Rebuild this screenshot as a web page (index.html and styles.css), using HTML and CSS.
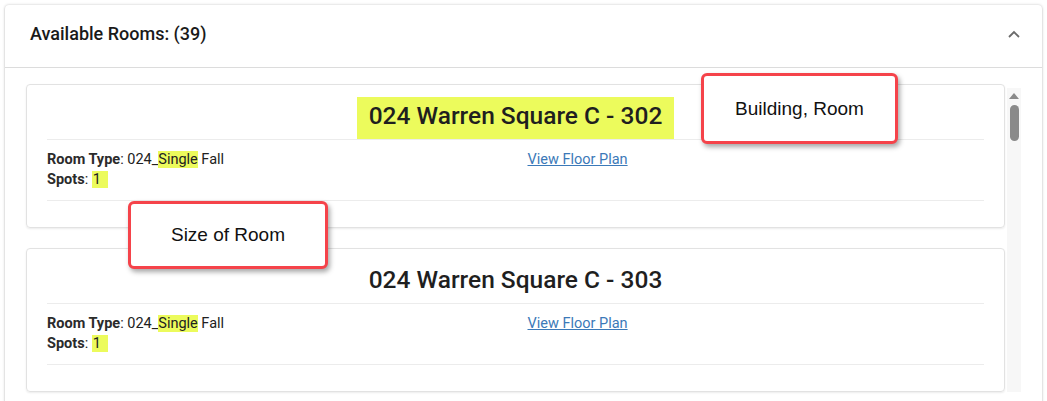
FILE: index.html
```html
<!DOCTYPE html>
<html lang="en">
<head>
    <meta charset="UTF-8">
    <title>Available Rooms</title>
    <link rel="stylesheet" href="styles.css">
</head>
<body>
<div class="panel">
    <div class="panel-head">
        <h2 class="panel-title">Available Rooms: (39)</h2>
        <svg class="chevron" width="12" height="8" viewBox="0 0 12 8"><path d="M1 7 L6 2 L11 7" fill="none" stroke="#6b6b6b" stroke-width="1.8"/></svg>
    </div>
    <div class="panel-body">
        <div class="room-list">
            <div class="room-card">
                <div class="room-name"><span class="mark mark-title">024 Warren Square C - 302</span></div>
                <div class="room-info">
                    <div class="col">
                        <div><b>Room Type</b>: 024_<span class="mark">Single</span> Fall</div>
                        <div><b>Spots</b>: <span class="mark mark-num">1</span></div>
                    </div>
                    <div class="col"><a href="#">View Floor Plan</a></div>
                </div>
            </div>
            <div class="room-card">
                <div class="room-name"><span>024 Warren Square C - 303</span></div>
                <div class="room-info">
                    <div class="col">
                        <div><b>Room Type</b>: 024_<span class="mark">Single</span> Fall</div>
                        <div><b>Spots</b>: <span class="mark mark-num">1</span></div>
                    </div>
                    <div class="col"><a href="#">View Floor Plan</a></div>
                </div>
            </div>
        </div>
        <div class="scrollbar">
            <div class="scroll-arrow"></div>
            <div class="scroll-thumb"></div>
        </div>
    </div>

    <div class="note note-building">Building, Room</div>
    <div class="note note-size">Size of Room</div>
</div>
</body>
</html>
```

FILE: styles.css
```css
* {
    margin: 0;
    padding: 0;
    box-sizing: border-box;
}

html, body {
    height: 100%;
    overflow: hidden;
    background: #fff;
}

body {
    padding: 5px 5px 0 5px;
    font-family: Roboto, "Liberation Sans", Arial, sans-serif;
    color: #212121;
}

.panel {
    position: relative;
    height: 420px;
    border-radius: 4px;
    background: #fff;
    box-shadow: 0 0 3px rgba(0, 0, 0, 0.22), 0 1px 2px rgba(0, 0, 0, 0.12);
}

.panel-head {
    height: 63px;
    display: flex;
    align-items: center;
    justify-content: space-between;
    padding: 0 22px 5px 25px;
    border-bottom: 1px solid #dcdcdc;
}

.panel-title {
    font-size: 18px;
    font-weight: 500;
    color: #1a1a1a;
}

.chevron {
    display: block;
}

.panel-body {
    display: flex;
    padding: 16px 21px 0 21px;
}

.room-list {
    flex: 1;
    display: flex;
    flex-direction: column;
    gap: 20px;
}

.room-card {
    border: 1px solid #e2e2e2;
    border-radius: 4px;
    padding: 12px 20px 26px 20px;
    box-shadow: 0 1px 2px rgba(0, 0, 0, 0.08);
}

.room-name {
    display: flex;
    justify-content: center;
    align-items: flex-start;
    height: 43px;
    font-size: 24.5px;
    font-weight: 500;
    line-height: 38px;
    color: #1f1f1f;
    border-bottom: 1px solid #ececec;
}

.mark {
    background: #ecfb5c;
}

.mark-title {
    height: 42px;
    padding: 0 12px;
}

.mark-num {
    padding: 0 7px 0 1px;
}

.room-info {
    display: flex;
    padding: 10px 0 10px 0;
    border-bottom: 1px solid #ececec;
    font-size: 14.5px;
    line-height: 20px;
}

.room-info .col {
    flex: 1;
}

.room-info .col + .col {
    padding-left: 24px;
}

.room-info b {
    font-weight: 700;
    color: #2b2b2b;
}

.room-info a {
    color: #3b79b8;
    text-decoration: underline;
}

.scrollbar {
    width: 14px;
    margin-left: 2px;
    margin-top: 4px;
    background: #f7f7f7;
    display: flex;
    flex-direction: column;
    align-items: center;
}

.scroll-arrow {
    width: 0;
    height: 0;
    border-left: 5px solid transparent;
    border-right: 5px solid transparent;
    border-bottom: 6px solid #8a8a8a;
    margin-top: 5px;
}

.scroll-thumb {
    width: 9px;
    height: 36px;
    margin-top: 6px;
    border-radius: 5px;
    background: #8a8a8a;
}

/* annotation callouts */
.note {
    position: absolute;
    display: flex;
    align-items: center;
    justify-content: center;
    background: #fff;
    border: 3px solid #f5434a;
    border-radius: 6px;
    box-shadow: 2px 3px 5px rgba(0, 0, 0, 0.35);
    font-family: "Liberation Sans", Arial, sans-serif;
    font-size: 19px;
    color: #111;
}

.note-building {
    left: 696px;
    top: 68px;
    width: 197px;
    height: 71px;
}

.note-size {
    left: 123px;
    top: 196px;
    width: 200px;
    height: 68px;
}
```
